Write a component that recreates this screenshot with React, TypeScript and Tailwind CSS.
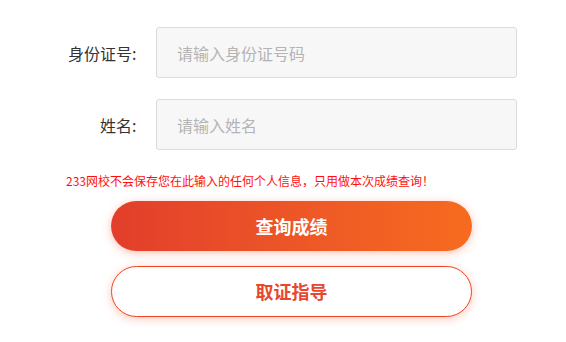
export default function App() {
  return (
    <div
      className="w-[566px] h-[342px] bg-white pt-[27px]"
      style={{ fontFamily: '"Noto Sans CJK SC", "Noto Sans", sans-serif' }}
    >
      <div className="flex flex-col gap-[21px]">
        <FormRow label="身份证号" placeholder="请输入身份证号码" />
        <FormRow label="姓名" placeholder="请输入姓名" />
      </div>
      <p className="ml-[66px] mt-[23px] text-[12px] leading-[16px] text-[#ff1010]">
        233网校不会保存您在此输入的任何个人信息，只用做本次成绩查询！
      </p>
      <div className="ml-[111px] mt-[12px] flex flex-col gap-[15px] w-[361px]">
        <button className="h-[50px] rounded-full bg-gradient-to-r from-[#e23e2b] to-[#f76b1f] text-white text-[18px] font-bold shadow-[0_2px_10px_rgba(240,80,40,0.35)]">
          查询成绩
        </button>
        <button className="h-[51px] rounded-full bg-white border border-[#f2431f] text-[#e8472d] text-[18px] font-bold shadow-[0_2px_10px_rgba(240,80,40,0.3)]">
          取证指导
        </button>
      </div>
    </div>
  );
}

function FormRow({ label, placeholder }: { label: string; placeholder: string }) {
  return (
    <div className="flex items-center">
      <label className="w-[140px] text-right text-[16px] text-[#333]">
        {label}
        <span className="inline-block w-[8px] text-left">:</span>
      </label>
      <input
        type="text"
        placeholder={placeholder}
        className="ml-[16px] w-[361px] h-[51px] rounded-[3px] border border-[#dcdcdc] bg-[#f7f7f7] px-[20px] text-[16px] text-[#333] placeholder:text-[#b4b4b4] outline-none"
      />
    </div>
  );
}
